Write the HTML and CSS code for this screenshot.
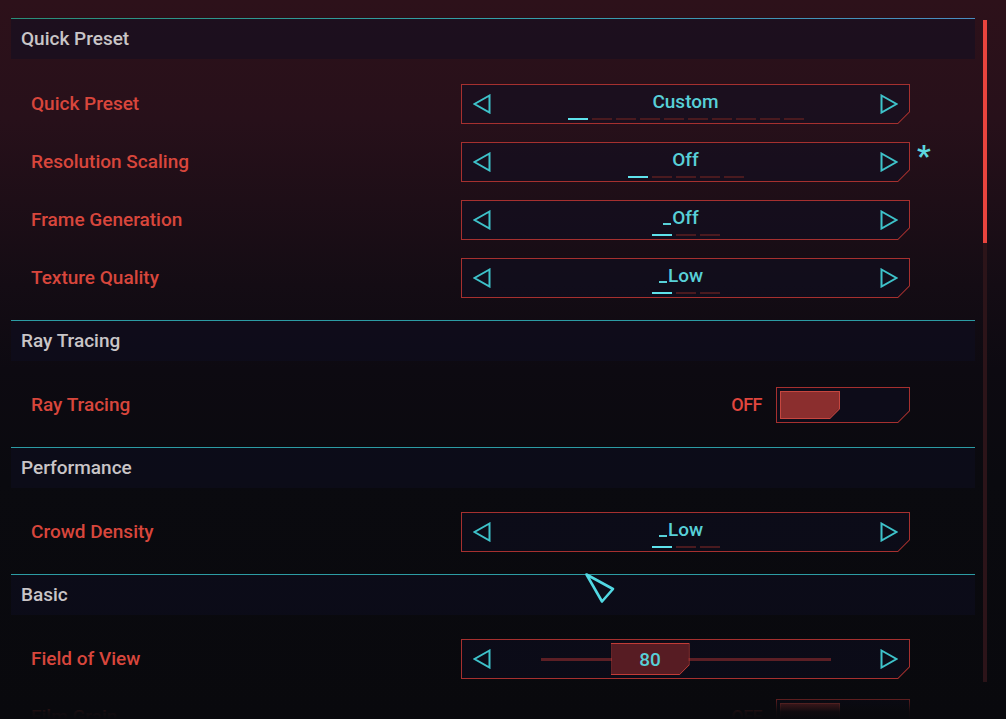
FILE: index.html
```html
<!DOCTYPE html>
<html lang="en">
<head>
<meta charset="utf-8">
<title>Graphics Settings</title>
<link rel="stylesheet" href="styles.css">
</head>
<body>
<div class="screen">
  <div class="list">

    <section class="group">
      <div class="group-head first">Quick Preset</div>
      <div class="group-body first">
        <div class="row">
          <span class="label">Quick Preset</span>
          <div class="ctrl">
            <div class="selector frame">
              <svg class="arrow" viewBox="0 0 18 20"><polygon points="16.5,1.5 1.5,10 16.5,18.5"/></svg>
              <div class="value">
                <span class="text">Custom</span>
                <div class="pips"><i class="on"></i><i></i><i></i><i></i><i></i><i></i><i></i><i></i><i></i><i></i></div>
              </div>
              <svg class="arrow" viewBox="0 0 18 20"><polygon points="1.5,1.5 16.5,10 1.5,18.5"/></svg>
            </div>
            <span class="mark"></span>
          </div>
        </div>
        <div class="row">
          <span class="label">Resolution Scaling</span>
          <div class="ctrl">
            <div class="selector frame">
              <svg class="arrow" viewBox="0 0 18 20"><polygon points="16.5,1.5 1.5,10 16.5,18.5"/></svg>
              <div class="value">
                <span class="text">Off</span>
                <div class="pips"><i class="on"></i><i></i><i></i><i></i><i></i></div>
              </div>
              <svg class="arrow" viewBox="0 0 18 20"><polygon points="1.5,1.5 16.5,10 1.5,18.5"/></svg>
            </div>
            <span class="mark"><span class="star">*</span></span>
          </div>
        </div>
        <div class="row">
          <span class="label">Frame Generation</span>
          <div class="ctrl">
            <div class="selector frame">
              <svg class="arrow" viewBox="0 0 18 20"><polygon points="16.5,1.5 1.5,10 16.5,18.5"/></svg>
              <div class="value">
                <span class="text caret">Off</span>
                <div class="pips"><i class="on"></i><i></i><i></i></div>
              </div>
              <svg class="arrow" viewBox="0 0 18 20"><polygon points="1.5,1.5 16.5,10 1.5,18.5"/></svg>
            </div>
            <span class="mark"></span>
          </div>
        </div>
        <div class="row">
          <span class="label">Texture Quality</span>
          <div class="ctrl">
            <div class="selector frame">
              <svg class="arrow" viewBox="0 0 18 20"><polygon points="16.5,1.5 1.5,10 16.5,18.5"/></svg>
              <div class="value">
                <span class="text caret">Low</span>
                <div class="pips"><i class="on"></i><i></i><i></i></div>
              </div>
              <svg class="arrow" viewBox="0 0 18 20"><polygon points="1.5,1.5 16.5,10 1.5,18.5"/></svg>
            </div>
            <span class="mark"></span>
          </div>
        </div>
      </div>
    </section>

    <section class="group">
      <div class="group-head">Ray Tracing</div>
      <div class="group-body">
        <div class="row">
          <span class="label">Ray Tracing</span>
          <div class="ctrl">
            <span class="state">OFF</span>
            <div class="toggle frame"><span class="knob frame"></span></div>
            <span class="mark"></span>
          </div>
        </div>
      </div>
    </section>

    <section class="group">
      <div class="group-head">Performance</div>
      <div class="group-body">
        <div class="row">
          <span class="label">Crowd Density</span>
          <div class="ctrl">
            <div class="selector frame">
              <svg class="arrow" viewBox="0 0 18 20"><polygon points="16.5,1.5 1.5,10 16.5,18.5"/></svg>
              <div class="value">
                <span class="text caret">Low</span>
                <div class="pips"><i class="on"></i><i></i><i></i></div>
              </div>
              <svg class="arrow" viewBox="0 0 18 20"><polygon points="1.5,1.5 16.5,10 1.5,18.5"/></svg>
            </div>
            <span class="mark"></span>
          </div>
        </div>
      </div>
    </section>

    <section class="group">
      <div class="group-head">Basic</div>
      <div class="group-body">
        <div class="row">
          <span class="label">Field of View</span>
          <div class="ctrl">
            <div class="selector frame">
              <svg class="arrow" viewBox="0 0 18 20"><polygon points="16.5,1.5 1.5,10 16.5,18.5"/></svg>
              <div class="track">
                <span class="thumb-box frame" style="left: 24.14%">80</span>
              </div>
              <svg class="arrow" viewBox="0 0 18 20"><polygon points="1.5,1.5 16.5,10 1.5,18.5"/></svg>
            </div>
            <span class="mark"></span>
          </div>
        </div>
        <div class="row">
          <span class="label">Film Grain</span>
          <div class="ctrl">
            <span class="state">OFF</span>
            <div class="toggle frame"><span class="knob frame"></span></div>
            <span class="mark"></span>
          </div>
        </div>
      </div>
    </section>

  </div>
  <div class="scroll"><div class="scroll-thumb"></div></div>

  <svg class="cursor" viewBox="0 0 32 32"><polygon points="2.5,2.5 29,17 18,29.5"/></svg>
  <div class="fade"></div>
</div>
</body>
</html>
```

FILE: styles.css
```css
html, body {
  margin: 0;
  padding: 0;
}

body {
  width: 1006px;
  height: 719px;
  overflow: hidden;
  font-family: Roboto, "Noto Sans", "Liberation Sans", sans-serif;
  background: linear-gradient(180deg,
    #2d111a 0px,
    #27101a 120px,
    #1e0e17 200px,
    #140c14 285px,
    #0d0a11 370px,
    #0a0a0f 480px,
    #09090d 719px);
}

.screen {
  position: relative;
  height: 719px;
  box-sizing: border-box;
  padding-top: 18px;
  display: flex;
  align-items: flex-start;
}

.list {
  width: 964px;
  margin-left: 11px;
}

/* section header */
.group-head {
  height: 40px;
  border-top: 1px solid #2c9ca4;
  background: rgba(14, 14, 34, 0.5);
  padding-left: 10px;
  color: #c9c5c7;
  font-size: 19px;
  font-weight: 500;
  line-height: 40px;
}

.group-head.first {
  border-top: 1px solid;
  border-image: linear-gradient(90deg, #2a8e78, #33a0a8 50%, #4a8cc0) 1;
}

.group-body {
  padding: 15px 0 13px;
}

.group-body.first {
  padding-top: 16px;
}

.row {
  height: 58px;
  display: flex;
  align-items: center;
  justify-content: space-between;
  padding-left: 20px;
}

.label {
  color: #d8463c;
  font-size: 19px;
  font-weight: 500;
  line-height: 20px;
}

.ctrl {
  display: flex;
  align-items: center;
}

.mark {
  width: 65px;
  align-self: flex-start;
  box-sizing: border-box;
  padding-left: 7px;
}

.star {
  display: block;
  margin-top: -1px;
  color: #5cd6de;
  font-size: 30px;
  font-weight: 700;
  line-height: 30px;
}

/* chamfered frame: 1px edge ring + inner fill, both clipped to the cut shape */
.frame {
  position: relative;
  isolation: isolate;
  --edge: #a6302f;
  --fill: rgba(14, 14, 34, 0.5);
  --cut: 12px;
}

.frame::before,
.frame::after {
  content: "";
  position: absolute;
  z-index: -1;
}

.frame::before {
  inset: 0;
  background: var(--edge);
  clip-path: polygon(evenodd,
    0 0, 100% 0, 100% calc(100% - var(--cut)), calc(100% - var(--cut)) 100%, 0 100%, 0 0,
    1px 1px, 1px calc(100% - 1px), calc(100% - var(--cut) - 0.4px) calc(100% - 1px),
    calc(100% - 1px) calc(100% - var(--cut) - 0.4px), calc(100% - 1px) 1px, 1px 1px);
}

.frame::after {
  inset: 1px;
  background: var(--fill);
  clip-path: polygon(0 0, 100% 0, 100% calc(100% - var(--cut) + 0.6px), calc(100% - var(--cut) + 0.6px) 100%, 0 100%);
}

.selector {
  width: 449px;
  height: 40px;
  box-sizing: border-box;
  padding: 0 12px;
  display: flex;
  align-items: center;
}

.arrow {
  width: 18px;
  height: 20px;
  flex: none;
  fill: none;
  stroke: #3ec2ca;
  stroke-width: 2;
  stroke-linejoin: miter;
}

.value {
  flex: 1;
  display: flex;
  flex-direction: column;
  align-items: center;
  padding-top: 4px;
}

.text {
  position: relative;
  color: #58d0d8;
  font-size: 19px;
  font-weight: 500;
  line-height: 20px;
}

.text.caret::before {
  content: "";
  position: absolute;
  right: 100%;
  bottom: 3px;
  width: 8px;
  height: 2px;
  margin-right: 1px;
  background: #58d0d8;
}

.pips {
  display: flex;
  gap: 4px;
  margin-top: 5.5px;
}

.pips i {
  display: block;
  width: 20px;
  height: 2px;
  background: #4a1a1f;
}

.pips i.on {
  background: #5ee2ec;
}

/* toggle */
.state {
  margin-right: 14px;
  color: #e0463e;
  font-size: 18px;
  font-weight: 500;
  letter-spacing: -0.5px;
  line-height: 20px;
}

.toggle {
  width: 134px;
  height: 36px;
  box-sizing: border-box;
  padding: 4px;
  display: flex;
}

.knob {
  display: block;
  width: 60px;
  height: 28px;
  --edge: #c6463f;
  --fill: #8b2e2e;
  --cut: 10px;
}

/* slider */
.track {
  position: relative;
  width: 290px;
  height: 32px;
  margin: 0 auto;
}

.track::before {
  content: "";
  position: absolute;
  left: 0;
  right: 0;
  top: 50%;
  height: 3px;
  margin-top: -1.5px;
  background: #5c1f25;
}

.thumb-box {
  position: absolute;
  top: 0;
  width: 79px;
  height: 32px;
  display: flex;
  align-items: center;
  justify-content: center;
  color: #58d0d8;
  font-size: 19px;
  font-weight: 500;
  --edge: #c23c37;
  --fill: #571c23;
  --cut: 10px;
}

/* scrollbar */
.scroll {
  width: 4px;
  height: 662px;
  margin-left: 8px;
  margin-top: 2px;
  background: #2c1419;
}

.scroll-thumb {
  height: 223px;
  background: #e8443e;
}

/* overlays */
.cursor {
  position: absolute;
  left: 584px;
  top: 572px;
  width: 32px;
  height: 32px;
  fill: none;
  stroke: #52d8e2;
  stroke-width: 2.6;
  stroke-linejoin: round;
}

.fade {
  position: absolute;
  left: 0;
  right: 0;
  bottom: 0;
  height: 40px;
  pointer-events: none;
  background: linear-gradient(180deg,
    rgba(9, 9, 13, 0) 0%,
    rgba(9, 9, 13, 0.45) 50%,
    rgba(9, 9, 13, 0.95) 82%,
    rgba(9, 9, 13, 1) 100%);
}
```
